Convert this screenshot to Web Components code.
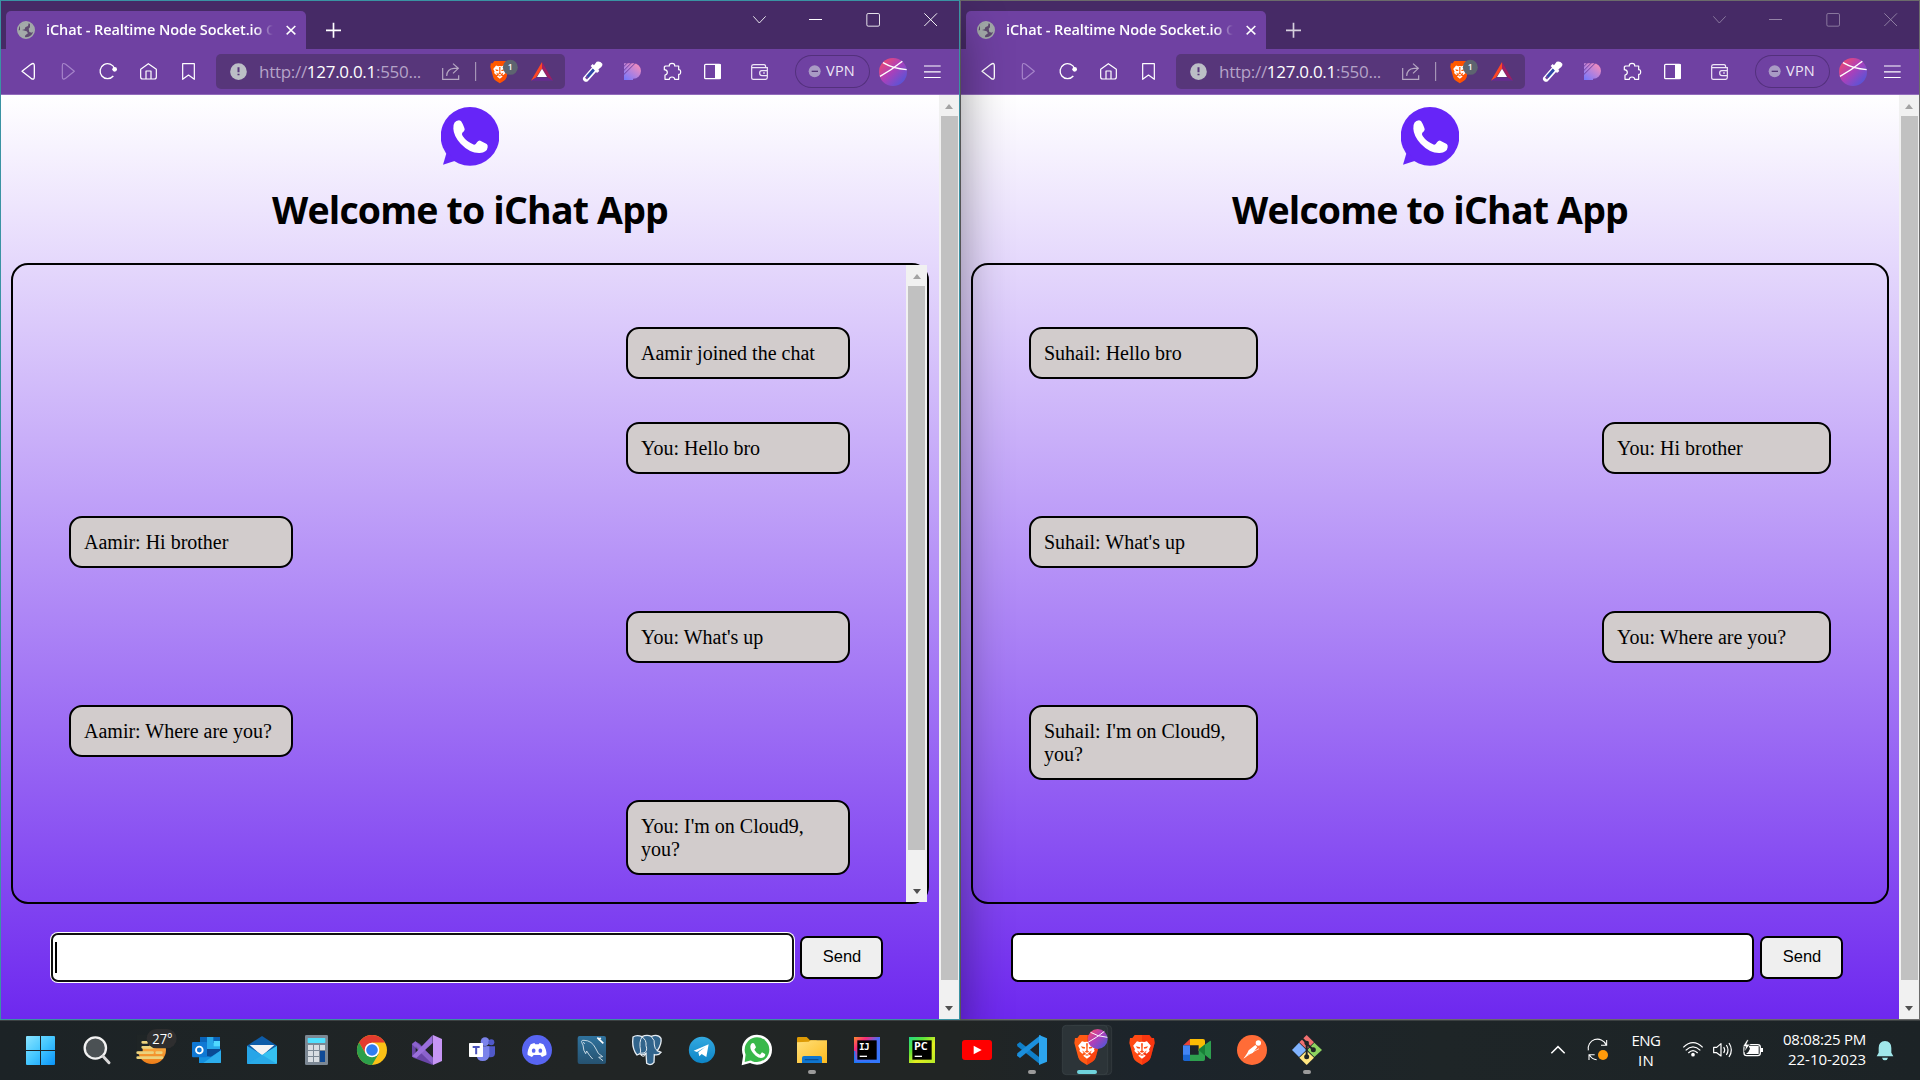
<!DOCTYPE html>
<html lang="en">
<head>
<meta charset="utf-8">
<title>iChat - Realtime Node Socket.io Chat App</title>
<style>
html,body{margin:0;height:100%;overflow:hidden;background:#1f2425}
</style>
</head>
<body>
<desk-top></desk-top>
<script>
// Icon artwork: [x, y, w, h, markup]; three drawing units make one CSS pixel.
const LION = (a,b) => `
 <path fill="${a}" d="M16 0H60L67 9L74 9L76 24L72 38L64 68Q61 76 54 80L38 90L22 80Q15 76 12 68L4 38L0 24L2 9L9 9Z"/>
 <path fill="${b}" d="M38 0H60L67 9L74 9L76 24L72 38L64 68Q61 76 54 80L38 90Z" opacity=".45"/>
 <g transform="translate(4.500 5) scale(.88 .9)"><path fill="#fff" d="M21 15L30 18Q38 16 46 18L55 15L68 30L62 42L64 48L54 57L46 52L42 55L43 59L51 64L38 74L25 64L33 59L34 55L30 52L22 57L12 48L14 42L8 30Z"/>
 <path fill="${a}" d="M17 32L32 35L30 40L22 39ZM59 32L44 35L46 40L54 39ZM35 22H41L40 46L46 50L38 54L30 50L36 46ZM22 46L30 52L25 54ZM54 46L46 52L51 54ZM30 61Q38 56 46 61L38 64Z"/></g>`;
const AV = (cx,cy,r) => `<defs><linearGradient id="av" x1="0" y1="0" x2="1" y2="1"><stop offset="0" stop-color="#ff4d5c"/><stop offset=".45" stop-color="#b03fb8"/><stop offset="1" stop-color="#3d5be0"/></linearGradient></defs>
 <circle cx="${cx}" cy="${cy}" r="${r}" fill="url(#av)"/>
 <g transform="translate(${cx} ${cy}) scale(${r/42})" stroke="#fff" stroke-width="4" fill="none"><path d="M-30-28Q0-10 41-7M-39 13Q-5-5 28-32"/></g>`;
const tb = (n,off,m) => [42+165*n-off,15,165,180,m];
const ICONS = {
 globe:[18,33,120,114,`<circle cx="78" cy="90" r="24.500" fill="#5f4a70" stroke="#a3aaa9" stroke-width="5"/><path fill="#a3aaa9" d="M60 76Q68 66 82 66L86 70L84 78L76 82L74 88L66 90L80 94L84 100L76 106L74 114Q56 108 54 92L60 90ZM90 70Q102 78 102 92L96 98L88 96L86 86L90 82Z"/>`],
 tabx:[825,33,93,114,`<path d="M860 78L886 103M886 78L860 103" stroke="#fff" stroke-width="4.600"/>`],
 plus:[918,33,165,114,`<path d="M978 91H1023M1000.500 68.500V113.500" stroke="#fff" stroke-width="5"/>`],
 chev:[765,3,150,144,`<path d="M820 49L838 69L857 49" fill="none" stroke="#fff" stroke-width="2.600"/>`],
 min:[915,3,180,144,`<path d="M987 58.500H1026" stroke="#fff" stroke-width="3"/>`],
 max:[1095,3,171,144,`<rect x="1160.500" y="40.500" width="38" height="38" rx="4" fill="none" stroke="#fff" stroke-width="2.600"/>`],
 close:[1266,3,171,144,`<path d="M1333 40L1371 78M1371 40L1333 78" stroke="#fff" stroke-width="2.800"/>`],
 back:[24,147,120,135,`<path d="M66 214L93 193Q103 186 103 198V230Q103 242 93 235Z" fill="none" stroke="#fff" stroke-width="4" stroke-linejoin="round"/>`],
 fwd:[144,147,120,135,`<path d="M223 214L197 193Q187 186 187 198V230Q187 242 197 235Z" fill="none" stroke="#a583c9" stroke-width="3.600" stroke-linejoin="round"/>`],
 reload:[264,147,120,135,`<path d="M344 206A22.500 22.500 0 1 0 340 228" fill="none" stroke="#fff" stroke-width="4"/><circle cx="344" cy="208" r="7" fill="#fff"/>`],
 home:[384,147,120,135,`<path d="M422 208L445 191L469 208V231Q469 237 463 237H428Q422 237 422 231ZM438 237V213H453V237" fill="none" stroke="#fff" stroke-width="3.600" stroke-linejoin="round"/>`],
 mark:[504,147,120,135,`<path d="M548 191H583V238L565.500 225L548 238Z" fill="none" stroke="#fff" stroke-width="3.600" stroke-linejoin="round"/>`],
 info:[648,162,129,105,`<circle cx="715.500" cy="215" r="25" fill="#bcbfc6"/><path d="M715.500 202V217M715.500 221V226" stroke="#57367a" stroke-width="6"/>`],
 share:[1269,162,171,105,`<path d="M1328 204V238H1376V226M1340 228Q1341 206 1362 205H1375M1359 191L1375 205L1359 220" fill="none" stroke="#b5a7c2" stroke-width="3.600"/><path d="M1427 186V243" stroke="#b5a7c2" stroke-width="3"/>`],
 shield:[0,162,135,105,`<g transform="translate(31 183) scale(.75 .74)">${LION('#ff5a00','#ff4400')}</g><circle cx="91" cy="202" r="22.500" fill="#5d6470"/><text x="91" y="211" text-anchor="middle" font-size="26" font-weight="600" fill="#fff" font-family="Open Sans">1</text>`],
 bat:[135,162,120,105,`<path fill="#ff4724" d="M186 186L153 242L167 234L186 205Z"/><path fill="#9e1f63" d="M186 186L219 242L204 234L186 205Z"/><path fill="#662d91" d="M153 242H219L204 233H167Z"/><path fill="#fff" d="M186 206L171 231H201Z"/>`],
 dropper:[255,147,141,135,`<path d="M318 236L344 207" stroke="#fff" stroke-width="18" stroke-linecap="round"/><path d="M322 231L343 207" stroke="#2f49a8" stroke-width="9"/><path d="M318 236L323 230" stroke="#6d40a1" stroke-width="8"/><path fill="#fff" d="M332 198L338 192L342 196L350 185Q360 182 367 191Q369 198 359 205L355 209L358 213L351 219Z"/>`],
 pie:[396,147,123,135,`<defs><linearGradient id="p" x1=".8" y1="0" x2="0" y2="1"><stop offset="0" stop-color="#f58cba"/><stop offset="1" stop-color="#7277ff"/></linearGradient></defs><path fill="url(#p)" d="M432 190H460A23 23 0 0 1 460 236H459V240H432Z"/><path d="M430 201L445 186M430 213L457 186M430 225L466 189" stroke="#6f41a2" stroke-width="3"/>`],
 puzzle:[519,147,117,135,`<path d="M556 198H568Q567 190 576 190Q585 190 584 198H596V209Q602 208 602 216Q602 224 596 223V238H584Q584 231 576 231Q568 231 568 238H555V225Q562 224 562 217Q562 210 553 209V201Z" fill="none" stroke="#fff" stroke-width="3.600" stroke-linejoin="round"/>`],
 side:[636,147,120,135,`<rect x="674" y="193" width="47" height="43" rx="3" fill="none" stroke="#fff" stroke-width="4"/><rect x="705" y="192" width="17" height="45" fill="#fff"/>`],
 wallet:[756,147,189,135,`<path d="M862 211V203H815V234Q815 238 820 238H857Q862 238 862 232V228M815 203V199Q815 194 821 194H852Q857 194 857 202M862 212H845Q839 212 839 219Q839 227 846 227H862Z" fill="none" stroke="#efe6f6" stroke-width="3.600"/><path d="M850 219H854" stroke="#fff" stroke-width="4"/>`],
 minus:[945,165,93,99,`<circle cx="1004" cy="214" r="18" fill="#a99bc5"/><path d="M995 214H1014" stroke="#57367a" stroke-width="4"/>`],
 avatar:[1170,147,135,135,AV(1239,216,42)],
 menu:[1305,147,132,135,`<path d="M1332 198H1382M1332 215.500H1382M1332 232.500H1382" stroke="#fff" stroke-width="3.400"/>`],
 logo:[603,51,174,177,`<circle cx="690" cy="139" r="88" fill="#6625f8"/><path fill="#6625f8" d="M621 184L609 224L646 212Z"/><path fill="#fff" d="M640 116Q639 92 657 91Q664 91 667 100Q674 114 674 119Q673 124 667 128Q664 132 668 138Q680 156 702 164Q707 165 711 157Q715 151 721 152L740 162Q744 165 743 172Q741 188 719 189Q690 190 662 161Q641 138 640 116Z"/>`],
 // taskbar
 start:tb(0,0,`<defs><linearGradient id="s" x1="0" y1="0" x2="1" y2="1"><stop offset="0" stop-color="#8ae4ff"/><stop offset=".5" stop-color="#43c6ff"/><stop offset="1" stop-color="#0a94f8"/></linearGradient></defs><path fill="url(#s)" d="M81 63H120V105H78V66Q78 63 81 63ZM123 63H162Q165 63 165 66V105H123ZM78 108H120V150H81Q78 150 78 147ZM123 108H165V147Q165 150 162 150H123Z"/>`),
 search:tb(1,0,`<circle cx="286" cy="99" r="32" fill="#4b5154" stroke="#f2f2f2" stroke-width="7"/><path d="M309 124L327 143" stroke="#d8d8d8" stroke-width="9" stroke-linecap="round"/>`),
 weather:tb(2,0,`<defs><linearGradient id="w" x1="0" y1="0" x2="0" y2="1"><stop offset="0" stop-color="#ffc45a"/><stop offset="1" stop-color="#ee7d18"/></linearGradient></defs><circle cx="456" cy="105" r="42" fill="url(#w)"/><path fill="#1f2526" d="M410 60H500V78H448V93H428V110H410Z"/><path d="M428 82H441M428 97H458M413 113H458M470 113H484M413 128H486" stroke="#ecd27c" stroke-width="8" stroke-linecap="round"/><rect x="440" y="42" width="90" height="58" rx="29" fill="#2e2e2f"/><text x="457" y="87" font-size="42" textLength="61" lengthAdjust="spacingAndGlyphs" fill="#fff" font-family="Open Sans">27°</text>`),
 outlook:tb(3,0,`<rect x="600" y="66" width="60" height="60" fill="#0a63b8"/><path fill="#28a8ea" d="M621 66H640V84H660V102H621Z"/><path fill="#50d9ff" d="M641 78H660V94H641Z"/><path fill="#0a4a94" d="M600 102H663V124H600Z"/><path fill="#1490df" d="M597 144V120L632 126L663 106V140Q663 144 658 144Z"/><path fill="#35b8f1" d="M663 106V144H610Z" opacity=".75"/><rect x="576" y="81" width="45" height="46" rx="3" fill="#0f78d4"/><circle cx="598" cy="105" r="10" fill="none" stroke="#fff" stroke-width="5.500"/>`),
 mail:tb(4,0,`<path fill="#0d5ca8" d="M741 92L786 63L831 92L786 125Z"/><path fill="#f3f3f3" d="M749 90H823L786 122Z"/><path fill="#26a5e8" d="M741 92L831 147H744Q741 147 741 144Z"/><path fill="#35c1f1" d="M831 92L770 130L741 147H828Q831 147 831 144Z"/><path fill="#1d93df" d="M831 147L786 119L741 147Z" opacity=".5"/>`),
 calc:tb(5,0,`<rect x="915" y="60" width="69" height="90" rx="4" fill="#7c8894"/><rect x="923" y="69" width="53" height="15" rx="2" fill="#4fe0ff"/><path fill="#d8dde2" d="M924 90H939V105H924ZM942 90H957V105H942ZM960 90H975V105H960ZM924 108H939V123H924ZM942 108H957V123H942ZM924 126H939V141H924ZM942 126H957V141H942Z"/><rect x="960" y="108" width="15" height="33" fill="#0f4a96"/>`),
 chrome:tb(6,0,`<circle cx="1116" cy="105" r="45" fill="#fbc116"/><path fill="#e33b2e" d="M1077 82.500A45 45 0 0 1 1155 82.500H1116L1097 116Z"/><path fill="#2c9f4b" d="M1077 82.500A45 45 0 0 0 1116 150L1136 116L1097 116Z"/><circle cx="1116" cy="105" r="22" fill="#fff"/><circle cx="1116" cy="105" r="17.500" fill="#2f7df0"/>`),
 vs:tb(7,0,`<path fill="#6a45a8" d="M1236 86L1246 79L1259 86L1298 129V150L1240 128L1236 124Z"/><path fill="#1f2526" d="M1247 93L1260 105L1247 117Z"/><path fill="#9a6fdb" d="M1236 124L1298 60V84L1249 129Z"/><path fill="#9a6fdb" d="M1246 79L1300 128V150L1236 88Z" opacity=".7"/><path fill="#c796f5" d="M1299 60L1326 72V138L1299 150Z"/>`),
 teams:tb(8,0,`<circle cx="1455" cy="80" r="13" fill="#7b83eb"/><circle cx="1474" cy="82" r="9" fill="#5059c9"/><path fill="#5059c9" d="M1458 94H1485V115Q1485 127 1472 127H1458Z"/><path fill="#7b83eb" d="M1430 94H1468V120Q1466 138 1448 138Q1432 138 1430 122Z"/><rect x="1407" y="84" width="42" height="42" rx="2" fill="#fff"/><path d="M1418 96H1439M1428.500 96V118" stroke="#4b53bc" stroke-width="6"/>`),
 discord:tb(9,1440,`<circle cx="171" cy="105" r="45" fill="#5865f2"/><path fill="#fff" d="M152 88L163 84L166 88H176L179 84L190 88Q201 106 199 120L186 126L181 120H161L156 126L143 120Q141 106 152 88Z"/><ellipse cx="161" cy="107" rx="5.500" ry="6.500" fill="#5865f2"/><ellipse cx="181" cy="107" rx="5.500" ry="6.500" fill="#5865f2"/>`),
 mysql:tb(10,1440,`<defs><linearGradient id="m" x1="0" y1="0" x2="0" y2="1"><stop offset="0" stop-color="#2f729d"/><stop offset="1" stop-color="#265270"/></linearGradient></defs><rect x="293" y="63" width="85" height="84" rx="6" fill="url(#m)"/><path d="M309 90Q299 74 312 76Q336 76 348 102Q352 117 368 125L356 127L369 137M309 90Q310 108 317 116L320 108Q328 122 338 132M309 82L315 86" fill="none" stroke="#dde9f0" stroke-width="2.600"/><path d="M352 68L370 85M362 68L356 76" stroke="#fff" stroke-width="5"/>`),
 pg:tb(11,1440,`<path fill="#31648c" stroke="#e4ebf1" stroke-width="4" d="M459 66Q470 58 486 65Q500 58 514 64Q534 56 543 70Q546 86 532 107L543 112Q536 122 523 119L522 142Q512 154 500 145L498 115Q488 124 480 116L471 120Q458 104 458 80Z"/><path d="M486 66Q476 80 482 108Q476 116 492 114Q504 108 498 92Q500 74 486 66M514 65Q526 76 523 90Q524 102 532 107M498 115Q493 130 482 120" fill="none" stroke="#e4ebf1" stroke-width="3"/>`),
 tg:tb(12,1440,`<defs><linearGradient id="t" x1="0" y1="0" x2="0" y2="1"><stop offset="0" stop-color="#33a9e0"/><stop offset="1" stop-color="#0d85c7"/></linearGradient></defs><circle cx="666" cy="105" r="39.500" fill="url(#t)"/><path fill="#fff" d="M641 107L686 88L679 126L665 117L658 124L655 112L676 96L651 111Z"/>`),
 wa:tb(13,1440,`<circle cx="831" cy="104" r="45" fill="#fff"/><path fill="#fff" d="M790 118L785 151L818 142Z"/><circle cx="831" cy="104" r="37" fill="#38b84a"/><path fill="#38b84a" d="M797 118L794 141L814 136Z"/><path fill="#fff" d="M811 94Q813 84 819 84Q823 84 825 90L828 97L823 104Q829 115 840 119L846 112L855 117Q857 120 853 125Q842 134 827 122Q810 108 811 94Z"/>`),
 files:tb(14,1440,`<path fill="#dd9a05" d="M951 70Q951 66 955 66H980L990 76H1010V96H951Z"/><defs><linearGradient id="f" x1="0" y1="0" x2="1" y2="1"><stop offset="0" stop-color="#ffdf7a"/><stop offset="1" stop-color="#fdbb1e"/></linearGradient></defs><path fill="url(#f)" d="M951 82L986 80L992 76H1041V144H951Z"/><path fill="#0f76cf" d="M966 144V128Q966 123 972 123H1020Q1026 123 1026 128V144Z"/><path d="M976 134H1014" stroke="#0a4d92" stroke-width="4" stroke-linecap="round"/><rect x="984" y="165" width="24" height="12" rx="6" fill="#9b9b9b"/>`),
 ij:tb(15,1440,`<defs><linearGradient id="i" x1="0" y1="0" x2="1" y2="1"><stop offset="0" stop-color="#fe8a2c"/><stop offset=".25" stop-color="#f92c78"/><stop offset=".5" stop-color="#4a6cf7"/><stop offset="1" stop-color="#2e7bff"/></linearGradient></defs><rect x="1122" y="66" width="78" height="78" fill="url(#i)"/><path d="M1124 108V142H1170" fill="none" stroke="#1679f5" stroke-width="4"/><rect x="1132" y="76" width="58" height="58" fill="#000"/><text x="1137" y="105" font-size="28" font-weight="700" fill="#fff" textLength="32" font-family="DejaVu Sans Mono">IJ</text><rect x="1139" y="122" width="22" height="4" fill="#fff"/>`),
 pc:tb(16,1440,`<defs><linearGradient id="c" x1="0" y1="0" x2="1" y2="1"><stop offset="0" stop-color="#21d789"/><stop offset=".3" stop-color="#5be33a"/><stop offset=".6" stop-color="#e4ee1f"/><stop offset="1" stop-color="#b6ec28"/></linearGradient></defs><rect x="1287" y="66" width="78" height="78" fill="url(#c)"/><rect x="1297" y="76" width="58" height="58" fill="#000"/><text x="1302" y="105" font-size="29" font-weight="700" fill="#fff" textLength="41" lengthAdjust="spacingAndGlyphs" font-family="Open Sans">PC</text><rect x="1304" y="122" width="22" height="4" fill="#fff"/>`),
 yt:tb(17,2880,`<rect x="6" y="75" width="90" height="60" rx="9" fill="#f00"/><path fill="#fff" d="M41 92L65 105L41 118Z"/>`),
 code:tb(18,2880,`<path fill="#0f7fc9" d="M171 88L180 81L240 128V148L172 94Z"/><path fill="#1b8fdc" d="M171 122L180 129L242 78V60L172 115Z"/><path fill="#2ca5ef" d="M237 60L261 70V140L237 150Z"/><rect x="204" y="165" width="24" height="12" rx="6" fill="#9b9b9b"/>`),
 brave1:tb(19,2880,`<rect x="330" y="31" width="125" height="148" rx="12" fill="#262d31" stroke="#3a4145" stroke-width="2"/><rect x="307" y="31" width="136" height="148" rx="12" fill="#2c3438" stroke="#3d4549" stroke-width="2"/><g transform="translate(343 60)">${LION('#ff5a14','#f02a0c')}</g>${AV(413,72,30)}<rect x="351" y="165" width="60" height="12" rx="6" fill="#6fd3dc"/>`),
 brave2:tb(20,2880,`<g transform="translate(508 60)">${LION('#ff4a14','#f0200c')}</g>`),
 meet:tb(21,2880,`<path fill="#ea4335" d="M690 72V91H670Z"/><path fill="#fbbc04" d="M690 72H729Q735 72 735 78V96L716 108V91H690Z"/><path fill="#4285f4" d="M669 91H690V120H669Z"/><path fill="#1a66d2" d="M669 119H690V138H674Q669 138 669 133Z"/><path fill="#2ea04f" d="M690 119H716V102L750 78Q753 76 753 80V130Q753 134 749 131L735 120V133Q735 138 730 138H690Z"/><path fill="#188038" d="M735 88V122L716 105Z"/>`),
 postman:tb(22,2880,`<circle cx="876" cy="105" r="45" fill="#ff6c37"/><circle cx="895" cy="84" r="8" fill="#fff"/><path fill="#fff" d="M886 90L892 96L878 114L866 118L850 132L862 114L866 106Z"/><path d="M853 128L880 110L897 101" fill="none" stroke="#fff" stroke-width="2"/>`),
 git:tb(23,2880,`<path fill="#f07070" d="M1040 60L1062 82L1040 103L1018 82Z"/><path fill="#80b3ff" d="M1017 83L1039 105L1017 126L996 105Z"/><path fill="#8dd35f" d="M1063 83L1086 105L1063 126L1042 105Z"/><path fill="#ffe680" d="M1040 107L1062 128L1040 150L1018 128Z"/><path d="M1024 68L1040 84V125M1040 86L1060 104" fill="none" stroke="#1f2526" stroke-width="6"/><circle cx="1040" cy="84" r="7" fill="#1f2526"/><circle cx="1060" cy="104" r="7.500" fill="#1f2526"/><circle cx="1040" cy="125" r="7.500" fill="#1f2526"/><rect x="1029" y="165" width="24" height="12" rx="6" fill="#9b9b9b"/>`),
 up:[120,30,108,180,`<path d="M154 130L174 110L194 130" fill="none" stroke="#fff" stroke-width="4.500"/>`],
 sync:[228,30,132,180,`<path d="M265 121A28 28 0 0 1 318 104M320 90V106H303M267 150V134H284M268 134Q276 148 290 149" fill="none" stroke="#fff" stroke-width="3.200"/><circle cx="309" cy="135" r="15" fill="#ff9a0a"/>`],
 status:[516,30,300,180,`<g fill="none" stroke="#fff" stroke-width="3.800"><path d="M550 112Q579 84 608 112M557 121Q579 100 601 121M565 129Q579 115 593 129"/><path d="M641 112H650L663 101V138L650 128H641ZM671 111Q677 120 671 129M679 105Q689 120 679 135M687 99Q701 120 687 141" stroke-linejoin="round" stroke-width="3.600"/><rect x="732" y="104" width="49" height="33" rx="8"/></g><circle cx="579" cy="134" r="5.500" fill="#fff"/><path fill="#fff" d="M746 108H776V132H738Q746 128 750 116ZM782 114H789V126H782Z"/><path fill="#fff" stroke="#1f2526" stroke-width="2" d="M741 89L728 110H737L733 126L750 103H740L746 90Z"/>`],
 bell:[1098,30,162,180,`<path fill="#a0e7ea" d="M1155 93Q1174 94 1174 114V128L1180 139H1130L1136 128V114Q1136 94 1155 93ZM1146 143H1164Q1162 151 1155 151Q1148 151 1146 143Z"/>`]
};
class PxIcon extends HTMLElement{
 connectedCallback(){
  const [x,y,w,h,m]=ICONS[this.getAttribute('name')];
  this.attachShadow({mode:'open'}).innerHTML=`<style>:host{display:block;flex:none;width:${w/3}px;height:${h/3}px}svg{display:block}</style><svg width="${w/3}" height="${h/3}" viewBox="${x} ${y} ${w} ${h}">${m}</svg>`;
 }
}
customElements.define('px-icon',PxIcon);
const I=n=>`<px-icon name="${n}"></px-icon>`;

// Single line of text whose tracking is adjusted to span a given width.
class FitText extends HTMLElement{
 connectedCallback(){
  const r=this.attachShadow({mode:'open'});
  r.innerHTML='<style>:host{display:block;white-space:nowrap}span{display:inline-block}</style><span><slot></slot></span>';
  const s=r.querySelector('span'),n=this.textContent.length,w=+this.getAttribute('w');
  s.style.letterSpacing=(w-s.getBoundingClientRect().width)/n+'px';
 }
}
customElements.define('fit-text',FitText);

class ScrollBar extends HTMLElement{
 connectedCallback(){
  this.attachShadow({mode:'open'}).innerHTML=`<style>
  :host{display:flex;flex-direction:column;align-items:center;flex:none;background:#f1f1f1;box-sizing:border-box;padding:9px 0 8px}
  i{width:0;height:0;border:4.500px solid transparent}
  .u{border-top:0;border-bottom:5px solid #a3a3a3;margin-bottom:7px}
  .d{border-bottom:0;border-top:5px solid #505050;margin-top:auto}
  b{width:17px;height:${this.getAttribute('thumb')}px;background:#c1c1c1}
  </style><i class="u"></i><b></b><i class="d"></i>`;
 }
}
customElements.define('scroll-bar',ScrollBar);

class ChatMessage extends HTMLElement{
 connectedCallback(){
  this.attachShadow({mode:'open'}).innerHTML=`<style>
  :host{display:block;box-sizing:border-box;width:calc(25% + .5px);min-width:224px;padding:13px 12px 12px 13px;margin-bottom:42.500px;border:2px solid #000;border-radius:13px;background:#d2cccc;font:20px/23px "Liberation Serif",serif;color:#000;align-self:flex-start}
  :host([mine]){align-self:flex-end}
  </style><slot></slot>`;
 }
}
customElements.define('chat-message',ChatMessage);

class ChatPage extends HTMLElement{
 connectedCallback(){
  const a=this.hasAttribute('active');
  this.attachShadow({mode:'open'}).innerHTML=`<style>
  :host{display:flex;flex:1;min-height:0}
  main{width:938px;height:924px;background:linear-gradient(#fff,#6e28ef);display:flex;flex-direction:column}
  .logo{display:flex;justify-content:center;padding-top:12px}
  h1{margin:16px 0 0;height:81px;display:flex;justify-content:center;font:700 37.500px/55px "Open Sans",sans-serif;color:#000}
  .box{margin:0 10px;height:641px;box-sizing:border-box;border:2px solid #000;border-radius:17px;display:flex}
  .list{flex:1;display:flex;flex-direction:column;padding:62px 0 0}
  .list ::slotted(*){margin-left:56px;margin-right:56px}
  form{display:flex;gap:6px;padding:29px 0 0 50px;align-items:flex-start}
  .in{box-sizing:border-box;width:743px;height:49px;border:2px solid #000;border-radius:7px;background:#fff;padding:7px 2px}
  .in.f{box-shadow:0 0 0 1px #fff;border-color:#101010}
  .in.f i{display:block;width:2px;height:31px;background:#000}
  button{margin:3px 0 0;width:83px;height:43px;box-sizing:border-box;border:2px solid #000;border-radius:7px;background:#efefef;color:#000;font:16.500px "Liberation Sans",sans-serif;padding:0 0 2px 1px}
  </style><main><div class="logo">${I('logo')}</div><h1><fit-text w="396">Welcome to iChat App</fit-text></h1>
  <div class="box"><div class="list"><slot></slot></div>${a?'<scroll-bar thumb="564" style="width:21px"></scroll-bar>':''}</div>
  <form><div class="in ${a?'f':''}"><i></i></div><button type="button">Send</button></form></main>
  <scroll-bar thumb="864" style="width:20px"></scroll-bar>`;
 }
}
customElements.define('chat-page',ChatPage);

class BrowserWindow extends HTMLElement{
 connectedCallback(){
  this.attachShadow({mode:'open'}).innerHTML=`<style>
  :host{display:flex;flex-direction:column;box-sizing:border-box;width:960px;height:1020px;border:1px solid #6b6b6b;background:#6f41a2;font-family:"Open Sans",sans-serif;color:#fff;position:relative}
  :host([active]){border-color:#3a93a3;z-index:1;box-shadow:0 24px 46px rgba(0,0,0,.42)}
  .strip{height:48px;background:#462a66;display:flex;flex:none;padding-left:5px}
  .tab{width:300px;height:38px;margin-top:10px;background:#6f41a2;border-radius:5px 5px 0 0;display:flex}
  .title{width:229px;font:600 14.500px/37px "Open Sans";overflow:hidden;-webkit-mask:linear-gradient(90deg,#000 208px,transparent 227px);mask:linear-gradient(90deg,#000 208px,transparent 227px)}
  .new{margin-top:10px}
  .ctl{display:flex;margin-left:auto}
  :host(:not([active])) .ctl{opacity:.42}
  :host(:not([active])) .new{opacity:.78}
  .bar{height:45px;flex:none;display:flex;padding-left:7px}
  .addr{margin:5px 0 0 8px;width:349px;height:35px;border-radius:5px;background:#57367a;display:flex}
  .url{width:164px;font-size:17px;line-height:35px;color:#b5a3c8}
  .url b{font-weight:400;color:#fff}
  .vpn{margin-top:6px;width:75px;height:33px;box-sizing:border-box;border-radius:17px;box-shadow:inset 0 0 0 1px #53307c;display:flex;font-size:14.500px;line-height:32px;color:#eee6f6}
  .line{height:1px;flex:none;background:#926cbb}
  </style>
  <div class="strip"><div class="tab">${I('globe')}<div class="title"><fit-text w="229">iChat - Realtime Node Socket.io C</fit-text></div>${I('tabx')}</div><div class="new">${I('plus')}</div>
  <div class="ctl">${['chev','min','max','close'].map(I).join('')}</div></div>
  <div class="bar">${['back','fwd','reload','home','mark'].map(I).join('')}
  <div class="addr">${I('info')}<div class="url"><fit-text w="162">http://<b>127.0.0.1</b>:550...</fit-text></div>${['share','shield','bat'].map(I).join('')}</div>
  ${['dropper','pie','puzzle','side','wallet'].map(I).join('')}<div class="vpn">${I('minus')}<fit-text w="29">VPN</fit-text></div>${I('avatar')}${I('menu')}</div>
  <div class="line"></div><slot></slot>`;
 }
}
customElements.define('browser-window',BrowserWindow);

class TaskBar extends HTMLElement{
 connectedCallback(){
  this.attachShadow({mode:'open'}).innerHTML=`<style>
  :host{display:flex;height:60px;width:1920px;box-sizing:border-box;padding-left:14px;background:linear-gradient(90deg,#1c2326,#212525 30%,#212524 50%,#1c242b 60%,#1e2527 75%,#1c2326);position:relative;z-index:2;box-shadow:inset 0 1px #3c4142;font:15px/20px "Open Sans",sans-serif;color:#fff}
  .tray{margin-left:auto;display:flex}
  .lang{width:52px;display:flex;flex-direction:column;align-items:center;padding-top:10px}
  .clock{width:94px;display:flex;flex-direction:column;align-items:flex-end;padding-top:9px}
  </style>${['start','search','weather','outlook','mail','calc','chrome','vs','teams','discord','mysql','pg','tg','wa','files','ij','pc','yt','code','brave1','brave2','meet','postman','git'].map(I).join('')}
  <div class="tray">${I('up')}${I('sync')}<div class="lang"><fit-text w="29">ENG</fit-text><fit-text w="16">IN</fit-text></div>${I('status')}
  <div class="clock"><fit-text w="83">08:08:25 PM</fit-text><fit-text w="78">22-10-2023</fit-text></div>${I('bell')}</div>`;
 }
}
customElements.define('task-bar',TaskBar);

class DeskTop extends HTMLElement{
 connectedCallback(){
  this.attachShadow({mode:'open'}).innerHTML=`<style>:host{display:block;width:1920px;height:1080px;overflow:hidden}.row{display:flex}</style>
  <div class="row"><browser-window active><chat-page active>
  <chat-message mine>Aamir joined the chat</chat-message><chat-message mine>You: Hello bro</chat-message><chat-message>Aamir: Hi brother</chat-message><chat-message mine>You: What's up</chat-message><chat-message>Aamir: Where are you?</chat-message><chat-message mine>You: I'm on Cloud9, you?</chat-message>
  </chat-page></browser-window><browser-window><chat-page>
  <chat-message>Suhail: Hello bro</chat-message><chat-message mine>You: Hi brother</chat-message><chat-message>Suhail: What's up</chat-message><chat-message mine>You: Where are you?</chat-message><chat-message>Suhail: I'm on Cloud9, you?</chat-message>
  </chat-page></browser-window></div><task-bar></task-bar>`;
 }
}
customElements.define('desk-top',DeskTop);
</script>
</body>
</html>
